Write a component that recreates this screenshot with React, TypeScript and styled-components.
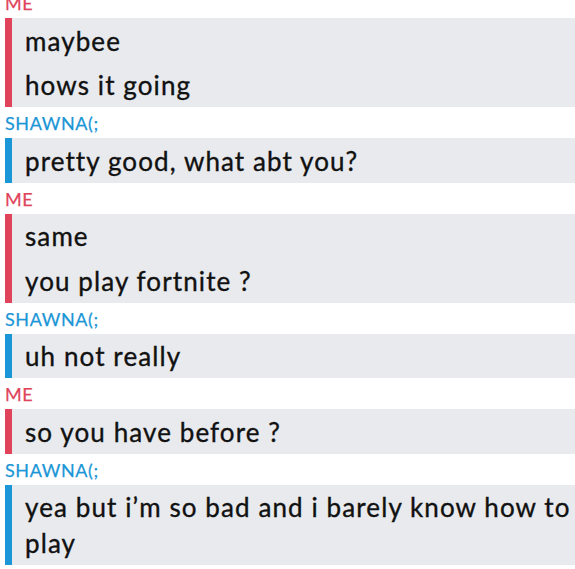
import React from "react";
import styled, { createGlobalStyle } from "styled-components";

const Global = createGlobalStyle`
  html, body { margin: 0; padding: 0; background: #ffffff; overflow: hidden; }
  body { font-family: Lato, "Noto Sans", sans-serif; }
`;

type Who = "me" | "them";
const colors: Record<Who, string> = { me: "#e0445b", them: "#1b96d6" };

const Chat = styled.div`
  display: flex;
  flex-direction: column;
  margin-top: -13px;
  padding-left: 5px;
`;

const Label = styled.div<{ $who: Who }>`
  height: 31px;
  display: flex;
  align-items: center;
  padding-top: 1px;
  box-sizing: border-box;
  font-size: 18px;
  letter-spacing: 0.6px;
  color: ${(p) => colors[p.$who]};
  -webkit-text-stroke: 0.25px ${(p) => colors[p.$who]};
`;

const Group = styled.div<{ $who: Who }>`
  display: flex;
  flex-direction: column;
  background: #e8eaed;
  border-left: 7px solid ${(p) => colors[p.$who]};
`;

const Message = styled.div`
  padding: 5.5px 0 3.5px 13px;
  font-size: 26px;
  letter-spacing: 1.1px;
  line-height: 35.5px;
  color: #111;
  -webkit-text-stroke: 0.35px #111;
`;

const convo: { who: Who; name: string; msgs: string[] }[] = [
  { who: "me", name: "ME", msgs: ["maybee", "hows it going"] },
  { who: "them", name: "SHAWNA(;", msgs: ["pretty good, what abt you?"] },
  { who: "me", name: "ME", msgs: ["same", "you play fortnite ?"] },
  { who: "them", name: "SHAWNA(;", msgs: ["uh not really"] },
  { who: "me", name: "ME", msgs: ["so you have before ?"] },
  {
    who: "them",
    name: "SHAWNA(;",
    msgs: ["yea but i\u2019m so bad and i barely know how to play"],
  },
];

export default function App() {
  return (
    <>
      <Global />
      <Chat>
        {convo.map((g, i) => (
          <React.Fragment key={i}>
            <Label $who={g.who}>{g.name}</Label>
            <Group $who={g.who}>
              {g.msgs.map((m, j) => (
                <Message key={j}>{m}</Message>
              ))}
            </Group>
          </React.Fragment>
        ))}
      </Chat>
    </>
  );
}
